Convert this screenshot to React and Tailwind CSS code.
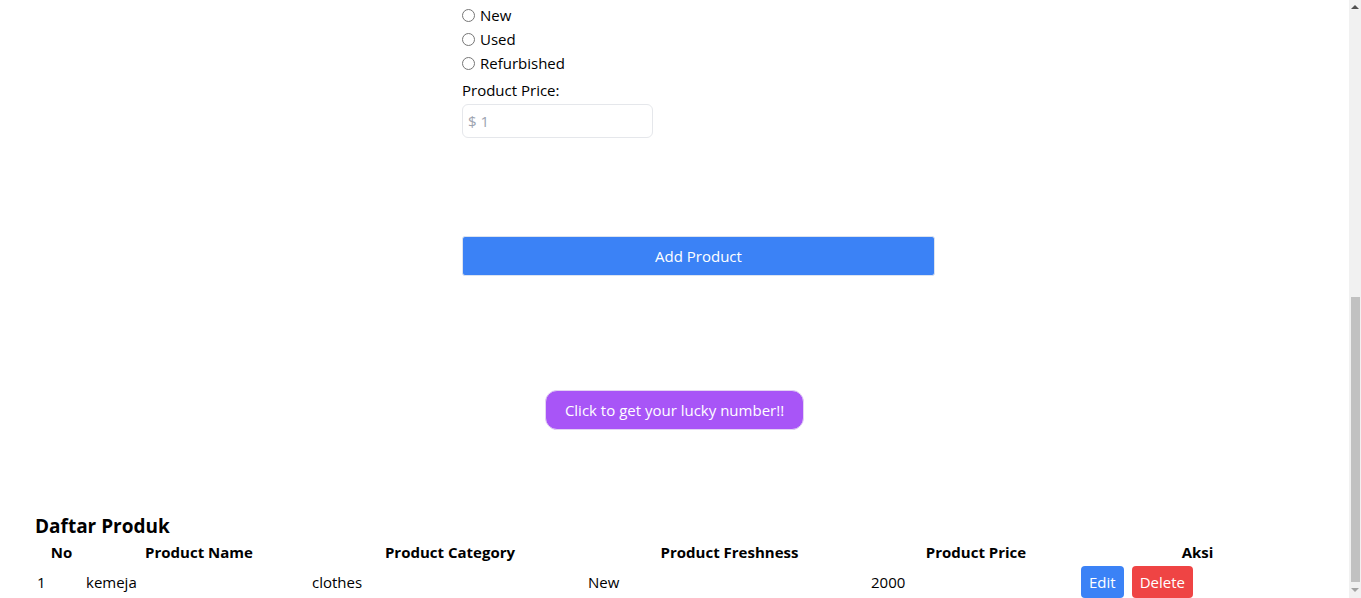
import React from "react";

const font = { fontFamily: '"Open Sans", "Noto Sans", sans-serif' };

function Radio({ label }) {
  return (
    <label className="flex h-6 items-center">
      <input type="radio" name="fresh" className="m-0 h-[13px] w-[13px]" />
      <span className="ml-[5px] text-[15px] text-black">{label}</span>
    </label>
  );
}

const cols = "grid grid-cols-[49px_226px_276px_283px_210px_233px]";

export default function App() {
  return (
    <div className="flex h-[598px] w-full overflow-hidden bg-white text-black" style={font}>
      <div className="flex w-[1349px] flex-col">
        <div className="flex flex-col pl-[462px] pt-[3px]">
          <Radio label="New" />
          <Radio label="Used" />
          <Radio label="Refurbished" />
          <div className="mt-[3px] flex h-6 items-center text-[15px]">Product Price:</div>
          <input
            className="mt-[2px] h-[34px] w-[191px] rounded-md border border-[#e5e7eb] px-[5px] text-[15px] outline-none placeholder:text-[#9ca3af]"
            placeholder="$ 1"
          />
          <button className="mt-[98px] h-10 w-[473px] rounded-[3px] border border-[#dbe3f0] bg-[#3b82f6] text-[15px] text-white">
            Add Product
          </button>
        </div>
        <div className="mt-[114px] flex justify-center">
          <button className="h-10 rounded-xl border border-[#e3d3f3] bg-[#a855f7] px-[19px] text-[15px] text-white">
            Click to get your lucky number!!
          </button>
        </div>
        <div className="mt-[82px] flex flex-col pl-[35px]">
          <h2 className="h-7 text-[19px] font-bold leading-7">Daftar Produk</h2>
          <div className={`${cols} h-6 items-center pl-[2px] text-[15px] font-bold`}>
            <div className="text-center">No</div>
            <div className="text-center">Product Name</div>
            <div className="text-center">Product Category</div>
            <div className="text-center">Product Freshness</div>
            <div className="text-center">Product Price</div>
            <div className="text-center">Aksi</div>
          </div>
          <div className={`${cols} mt-[2px] h-8 items-center pl-[2px] text-[15px]`}>
            <div>1</div>
            <div>kemeja</div>
            <div>clothes</div>
            <div>New</div>
            <div>2000</div>
            <div className="flex gap-2">
              <button className="h-8 rounded bg-[#3b82f6] px-2 text-white">Edit</button>
              <button className="h-8 rounded bg-[#ef4444] px-2 text-white">Delete</button>
            </div>
          </div>
        </div>
      </div>
      <div className="fixed right-0 top-0 flex h-[598px] w-3 flex-col items-center bg-[#f1f1f1]">
        <div className="mt-[5px] h-0 w-0 border-x-[4px] border-b-[4px] border-x-transparent border-b-[#505050]" />
        <div className="mt-[288px] h-[285px] w-[9px] bg-[#c1c1c1]" />
        <div className="mt-[6px] h-0 w-0 border-x-[4px] border-t-[4px] border-x-transparent border-t-[#a3a3a3]" />
      </div>
    </div>
  );
}
